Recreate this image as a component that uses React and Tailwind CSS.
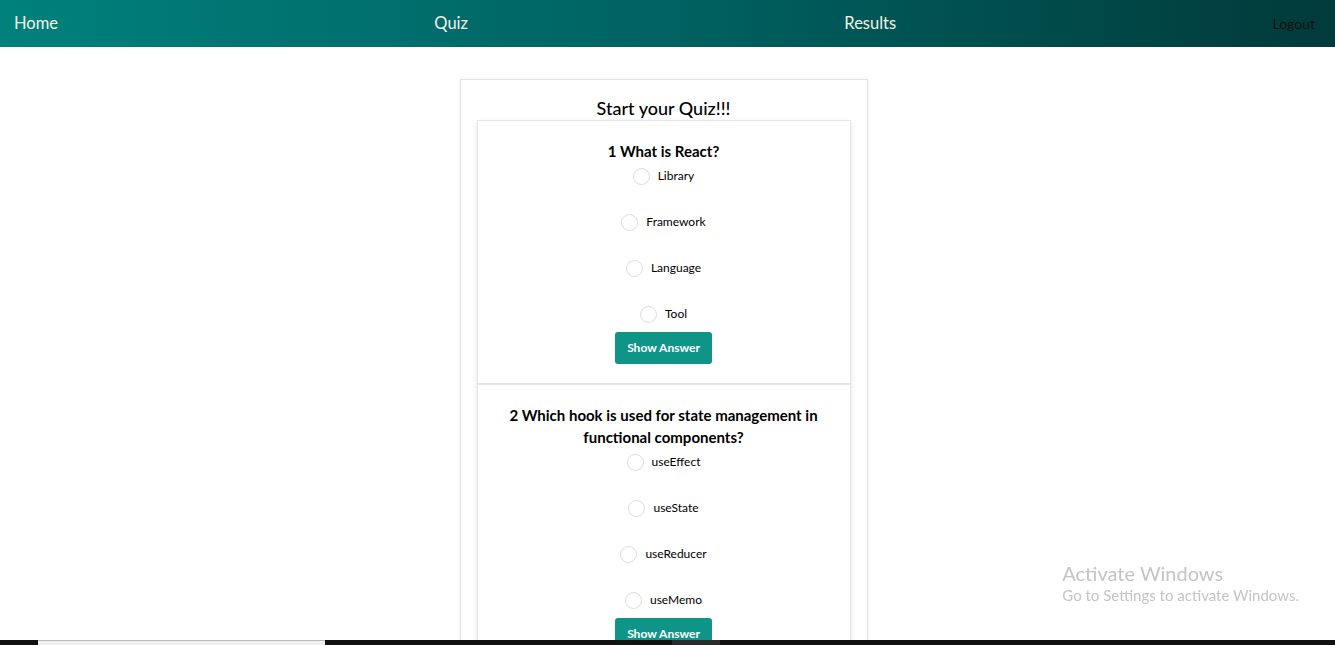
import { useState } from "react";

const preguntas = [
  {
    id: 1,
    texto: "What is React?",
    opciones: ["Library", "Framework", "Language", "Tool"],
    respuesta: "Library",
  },
  {
    id: 2,
    texto: "Which hook is used for state management in functional components?",
    opciones: ["useEffect", "useState", "useReducer", "useMemo"],
    respuesta: "useState",
  },
  {
    id: 3,
    texto: "What does JSX stand for?",
    opciones: ["JavaScript XML", "Java Syntax", "JSON XML", "None"],
    respuesta: "JavaScript XML",
  },
];

function Pregunta({ p }) {
  const [elegida, setElegida] = useState("");
  const [mostrar, setMostrar] = useState(false);

  return (
    <div className="bg-white border border-gray-200 shadow-[0_3px_6px_rgba(0,0,0,0.12)] px-5 pt-[19px] pb-[19px] flex flex-col items-center">
      <h3 className="text-[15px] leading-[22px] font-bold text-black text-center">
        {p.id} {p.texto}
      </h3>
      <div className="mt-1 flex flex-col items-center gap-[26px]">
        {p.opciones.map((op) => (
          <label key={op} className="h-5 flex items-center gap-2 cursor-pointer">
            <input
              type="radio"
              name={`q${p.id}`}
              value={op}
              checked={elegida === op}
              onChange={() => setElegida(op)}
              className="appearance-none w-[17px] h-[17px] rounded-full border border-[#dcdcdc] bg-white checked:border-[5px] checked:border-[#0d9488]"
            />
            <span className="text-[12px] text-black">{op}</span>
          </label>
        ))}
      </div>
      <button
        onClick={() => setMostrar(!mostrar)}
        className="mt-2 h-8 px-[12px] bg-[#0f9488] rounded-[3px] text-white text-[12px] font-bold"
      >
        Show Answer
      </button>
      {mostrar && (
        <p className="mt-2 text-xs text-teal-700">Answer: {p.respuesta}</p>
      )}
    </div>
  );
}

export default function App() {
  return (
    <div className="min-h-screen bg-white font-['Segoe_UI',Lato,sans-serif]">
      {/* Navbar */}
      <nav className="h-[47px] bg-linear-to-r from-[#00817c] via-[#006262] to-[#013a3a] flex items-center justify-between pl-[14px] pr-[20px] text-[16.5px]">
        <a className="text-[#f4f1e4]">Home</a>
        <a className="text-[#f4f1e4]">Quiz</a>
        <a className="text-[#f4f1e4]">Results</a>
        <a className="text-[#111] text-[14px]">Logout</a>
      </nav>

      {/* Contenedor del quiz */}
      <div className="flex justify-center pt-8 pr-2">
        <div className="w-[408px] border border-[#e2e2e2] shadow-[0_0_6px_rgba(0,0,0,0.06)] px-4 pt-4">
          <h2 className="text-[18px] leading-6 font-medium text-black text-center">
            Start your Quiz!!!
          </h2>
          <div className="flex flex-col">
            {preguntas.map((p) => (
              <Pregunta key={p.id} p={p} />
            ))}
          </div>
        </div>
      </div>

      {/* Marca de agua */}
      <div className="fixed right-[36px] bottom-[40px] text-[#c4c4c4] pointer-events-none">
        <p className="text-[20px] leading-6">Activate Windows</p>
        <p className="text-[15px] leading-5">Go to Settings to activate Windows.</p>
      </div>

      {/* Barra inferior */}
      <div className="fixed bottom-0 left-0 w-full h-[5px] bg-[#111] flex">
        <div className="ml-[38px] w-[287px] h-full bg-[#efefef] border-t border-[#bbb]"></div>
        <div className="ml-[347px] w-[48px] h-full bg-[#2a2a2a]"></div>
      </div>
    </div>
  );
}
